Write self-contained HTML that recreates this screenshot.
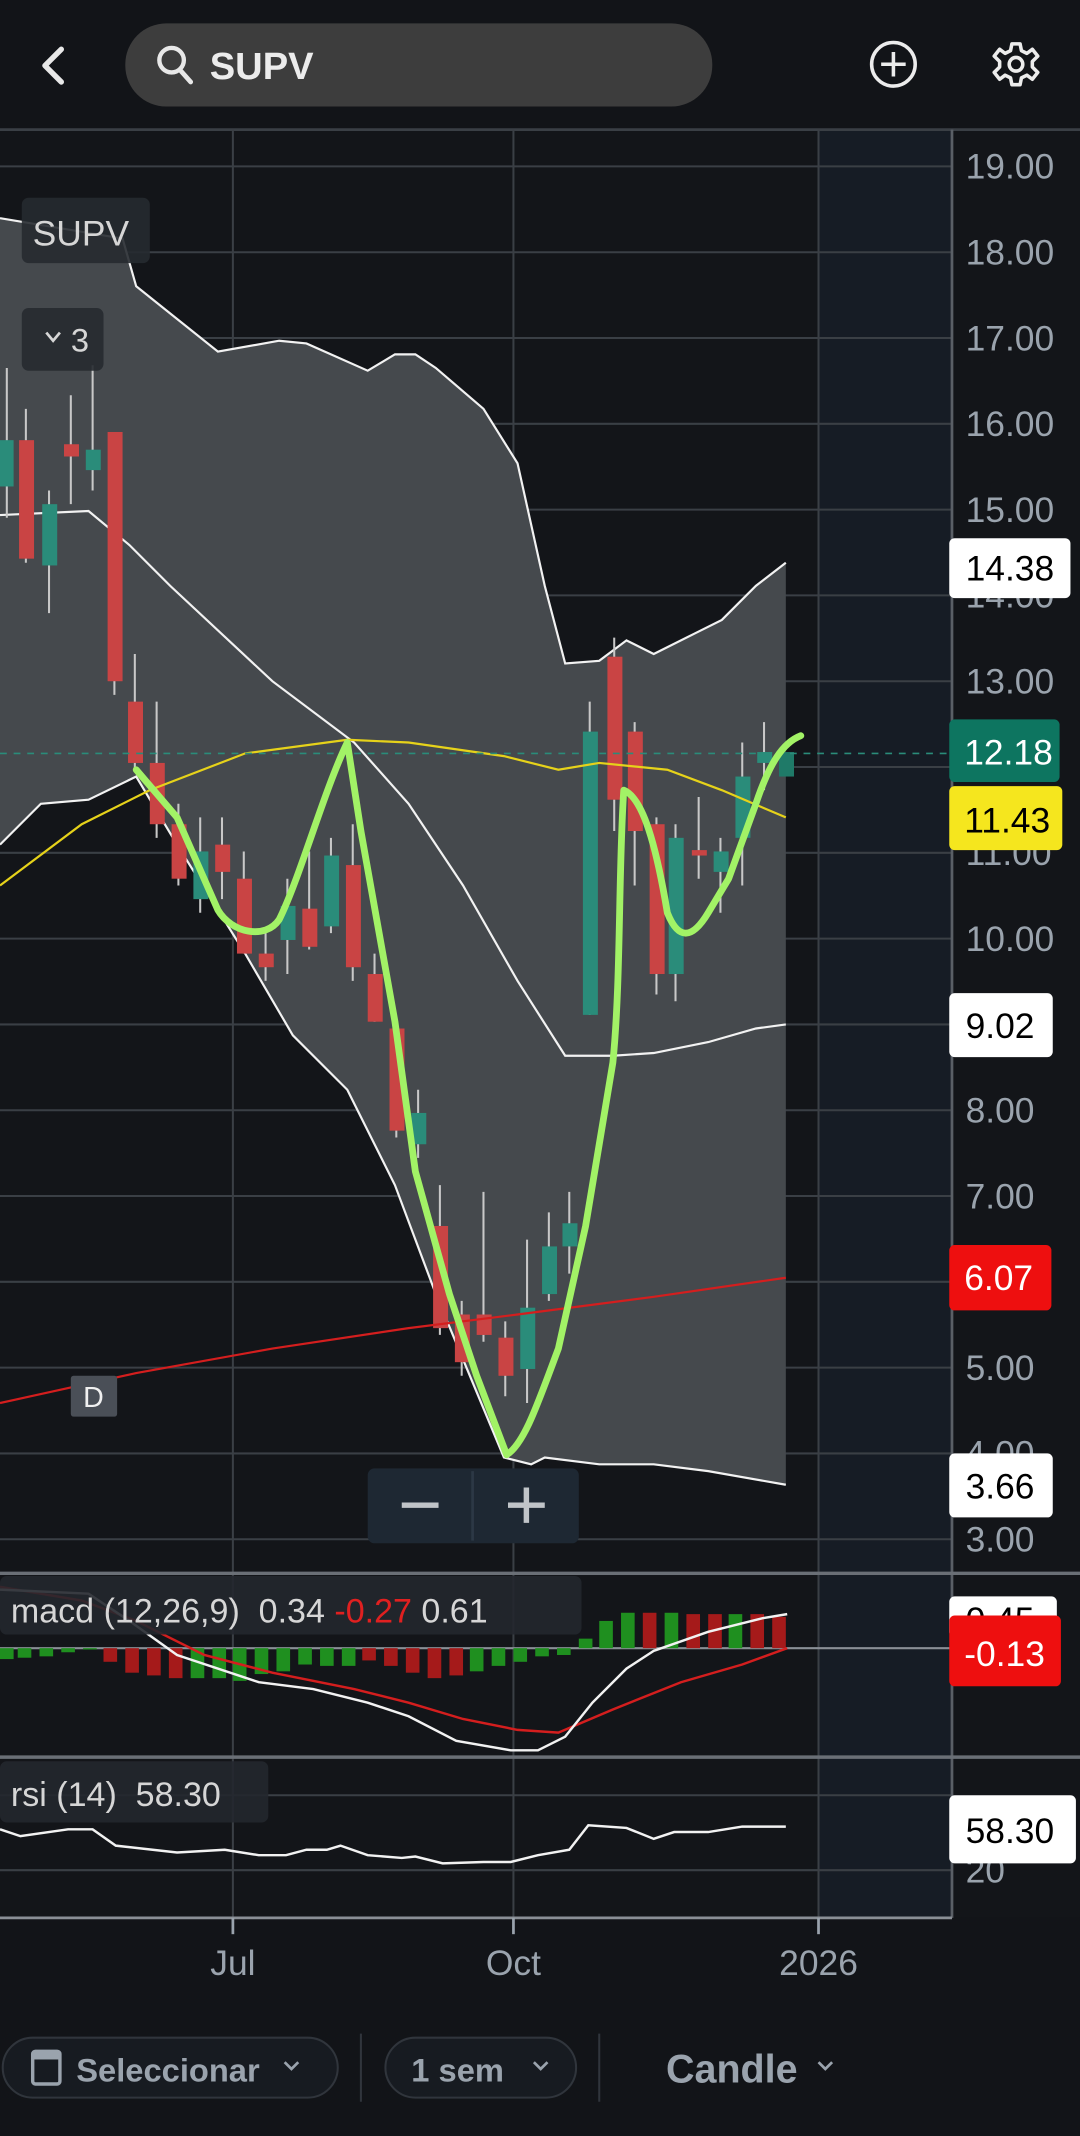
<!DOCTYPE html>
<html><head><meta charset="utf-8"><style>
html,body{margin:0;padding:0;background:#121418;}
svg{display:block}
text{font-family:"Liberation Sans",sans-serif;white-space:pre}
</style></head><body>
<svg width="1080" height="2136" viewBox="0 0 793 1568" xmlns="http://www.w3.org/2000/svg">
<rect width="793" height="1568" fill="#121418"/>
<!-- header -->
<path d="M45 36 L33 48 L45 60" fill="none" stroke="#e8e8e8" stroke-width="4" stroke-linecap="round" stroke-linejoin="round"/>
<rect x="92" y="17" width="431" height="61" rx="30" fill="#3d3d3d"/>
<circle cx="126" cy="44" r="9" fill="none" stroke="#e8e8e8" stroke-width="3.2"/>
<line x1="132" y1="51" x2="140" y2="60" stroke="#e8e8e8" stroke-width="3.5" stroke-linecap="round"/>
<text x="154" y="58" font-size="28" font-weight="bold" fill="#ececec">SUPV</text>
<circle cx="656" cy="47" r="16" fill="none" stroke="#ececec" stroke-width="2.6"/>
<path d="M656 38 V56 M647 47 H665" stroke="#ececec" stroke-width="2.6"/>
<g transform="translate(746,47)" fill="none" stroke="#ececec" stroke-width="2.6">
<path d="M-3 -15 H3 L4 -10 L8 -8 L12 -11 L16 -6 L12 -2 L12 2 L16 6 L12 11 L8 8 L4 10 L3 15 H-3 L-4 10 L-8 8 L-12 11 L-16 6 L-12 2 L-12 -2 L-16 -6 L-12 -11 L-8 -8 L-4 -10 Z" stroke-linejoin="round"/>
<circle r="5"/>
</g>
<!-- chart bg -->
<rect x="0" y="95" width="793" height="1313" fill="#131519"/>
<rect x="601" y="95" width="98" height="1313" fill="#161c25"/>
<line x1="0" y1="95" x2="793" y2="95" stroke="#3a3f45" stroke-width="2"/>
<g stroke="#3a3f45" stroke-width="1.5">
<line x1="0" y1="122" x2="699" y2="122"/><line x1="0" y1="185" x2="699" y2="185"/><line x1="0" y1="248" x2="699" y2="248"/><line x1="0" y1="311" x2="699" y2="311"/><line x1="0" y1="374" x2="699" y2="374"/><line x1="0" y1="437" x2="699" y2="437"/><line x1="0" y1="500" x2="699" y2="500"/><line x1="0" y1="563" x2="699" y2="563"/><line x1="0" y1="626" x2="699" y2="626"/><line x1="0" y1="689" x2="699" y2="689"/><line x1="0" y1="752" x2="699" y2="752"/><line x1="0" y1="815" x2="699" y2="815"/><line x1="0" y1="878" x2="699" y2="878"/><line x1="0" y1="941" x2="699" y2="941"/><line x1="0" y1="1004" x2="699" y2="1004"/><line x1="0" y1="1067" x2="699" y2="1067"/><line x1="0" y1="1130" x2="699" y2="1130"/>
<line x1="0" y1="1318" x2="699" y2="1318"/><line x1="0" y1="1373" x2="699" y2="1373"/>
<line x1="171" y1="95" x2="171" y2="1408"/><line x1="377" y1="95" x2="377" y2="1408"/><line x1="601" y1="95" x2="601" y2="1408"/>
</g>
<path d="M0 160 L90 175 L100 210 L125 230 L160 258 L205 250 L225 252 L270 272 L290 260 L305 260 L320 270 L355 300 L380 340 L400 430 L415 487 L440 485 L460 470 L480 480 L510 465 L530 455 L555 430 L577 413 L577 1090 L520 1080 L480 1075 L440 1075 L400 1070 L390 1075 L370 1070 L345 1010 L320 950 L290 870 L255 800 L215 760 L180 700 L130 620 L100 570 L65 587 L30 590 L0 620 Z" fill="#45494d"/>
<g fill="none" stroke="#f2f2f2" stroke-width="1.6">
<path d="M0 160 L90 175 L100 210 L125 230 L160 258 L205 250 L225 252 L270 272 L290 260 L305 260 L320 270 L355 300 L380 340 L400 430 L415 487 L440 485 L460 470 L480 480 L510 465 L530 455 L555 430 L577 413"/>
<path d="M577 1090 L520 1080 L480 1075 L440 1075 L400 1070 L390 1075 L370 1070 L345 1010 L320 950 L290 870 L255 800 L215 760 L180 700 L130 620 L100 570 L65 587 L30 590 L0 620"/>
<path d="M0 378 L65 375 L95 400 L125 430 L200 500 L260 545 L300 590 L340 650 L380 720 L415 775 L450 775 L480 773 L520 765 L555 755 L577 752"/>
</g>
<g stroke="#c8c8c8" stroke-width="1.5">
<line x1="5" y1="270" x2="5" y2="380"/><line x1="19" y1="300" x2="19" y2="413"/><line x1="36" y1="360" x2="36" y2="450"/><line x1="52" y1="290" x2="52" y2="370"/><line x1="68" y1="268" x2="68" y2="360"/><line x1="84" y1="317" x2="84" y2="510"/><line x1="99" y1="480" x2="99" y2="565"/><line x1="115" y1="515" x2="115" y2="615"/><line x1="131" y1="590" x2="131" y2="650"/><line x1="147" y1="600" x2="147" y2="670"/><line x1="163" y1="600" x2="163" y2="660"/><line x1="179" y1="625" x2="179" y2="700"/><line x1="195" y1="685" x2="195" y2="720"/><line x1="211" y1="645" x2="211" y2="715"/><line x1="227" y1="625" x2="227" y2="697"/><line x1="243" y1="615" x2="243" y2="685"/><line x1="259" y1="605" x2="259" y2="720"/><line x1="275" y1="700" x2="275" y2="750"/><line x1="291" y1="755" x2="291" y2="835"/><line x1="307" y1="800" x2="307" y2="850"/><line x1="323" y1="870" x2="323" y2="980"/><line x1="339" y1="955" x2="339" y2="1010"/><line x1="355" y1="875" x2="355" y2="985"/><line x1="371" y1="970" x2="371" y2="1025"/><line x1="387" y1="910" x2="387" y2="1030"/><line x1="403" y1="890" x2="403" y2="955"/><line x1="418" y1="875" x2="418" y2="935"/><line x1="433" y1="515" x2="433" y2="745"/><line x1="451" y1="468" x2="451" y2="610"/><line x1="466" y1="530" x2="466" y2="650"/><line x1="482" y1="600" x2="482" y2="730"/><line x1="496" y1="605" x2="496" y2="735"/><line x1="513" y1="585" x2="513" y2="645"/><line x1="529" y1="615" x2="529" y2="670"/><line x1="545" y1="545" x2="545" y2="650"/><line x1="561" y1="530" x2="561" y2="580"/>
</g>
<g fill="#c94444">
<rect x="14" y="323" width="11" height="87"/><rect x="47" y="326" width="11" height="9"/><rect x="79" y="317" width="11" height="183"/><rect x="94" y="515" width="11" height="45"/><rect x="110" y="560" width="11" height="45"/><rect x="126" y="605" width="11" height="40"/><rect x="158" y="620" width="11" height="20"/><rect x="174" y="645" width="11" height="55"/><rect x="190" y="700" width="11" height="10"/><rect x="222" y="667" width="11" height="28"/><rect x="254" y="635" width="11" height="75"/><rect x="270" y="715" width="11" height="35"/><rect x="286" y="755" width="11" height="75"/><rect x="318" y="900" width="11" height="75"/><rect x="334" y="965" width="11" height="35"/><rect x="350" y="965" width="11" height="15"/><rect x="366" y="982" width="11" height="28"/><rect x="446" y="482" width="11" height="105"/><rect x="461" y="537" width="11" height="73"/><rect x="477" y="605" width="11" height="110"/><rect x="508" y="624" width="11" height="4"/>
</g>
<g fill="#2a8c7a">
<rect x="0" y="323" width="10" height="34"/><rect x="31" y="370" width="11" height="45"/><rect x="63" y="330" width="11" height="15"/><rect x="142" y="625" width="11" height="35"/><rect x="206" y="665" width="11" height="25"/><rect x="238" y="628" width="11" height="52"/><rect x="302" y="817" width="11" height="23"/><rect x="382" y="960" width="11" height="45"/><rect x="398" y="915" width="11" height="35"/><rect x="413" y="898" width="11" height="17"/><rect x="428" y="537" width="11" height="208"/><rect x="491" y="615" width="11" height="100"/><rect x="524" y="625" width="11" height="15"/><rect x="540" y="570" width="11" height="45"/><rect x="556" y="552" width="11" height="8"/><rect x="572" y="552" width="11" height="18" fill="#1f7a68"/>
</g>
<path d="M0 650 L60 605 L110 580 L180 553 L255 543 L300 545 L370 555 L410 565 L440 560 L490 565 L530 580 L577 600" fill="none" stroke="#e6d21a" stroke-width="1.6"/>
<path d="M0 1030 L100 1008 L200 990 L300 975 L380 965 L480 952 L577 938" fill="none" stroke="#d41e1e" stroke-width="1.6"/>
<line x1="0" y1="553" x2="699" y2="553" stroke="#2a8c7a" stroke-width="1.2" stroke-dasharray="5,5"/>
<path d="M100 565 L130 600 L160 668 C170 685 195 690 205 675 C220 645 238 580 255 545 L265 610 L290 750 L305 860 L330 950 L350 1010 L372 1068 C385 1060 395 1030 410 990 L430 900 L450 780 C456 720 454 640 458 580 C470 585 480 610 490 670 C498 690 508 690 520 670 L535 645 L555 590 C565 560 575 545 588 540" fill="none" stroke="#a2f266" stroke-width="5" stroke-linecap="round" stroke-linejoin="round"/>
<rect x="16" y="145" width="94" height="48" rx="5" fill="#262a30" opacity="0.9"/>
<text x="24" y="180" font-size="26" fill="#d6d6d6">SUPV</text>
<rect x="16" y="226" width="60" height="46" rx="5" fill="#262a30" opacity="0.9"/>
<path d="M34 244 L39 250 L44 244" fill="none" stroke="#d6d6d6" stroke-width="2"/>
<text x="52" y="258" font-size="24" fill="#d6d6d6">3</text>
<rect x="52" y="1010" width="34" height="30" rx="2" fill="#4a4f57"/>
<text x="61" y="1033" font-size="21" fill="#f0f0f0">D</text>
<rect x="270" y="1078" width="155" height="55" rx="5" fill="#1e2833"/>
<line x1="347" y1="1080" x2="347" y2="1131" stroke="#2c3845" stroke-width="2"/>
<path d="M295 1105 H322 M373 1105 H400 M386.5 1092 V1118" stroke="#c0c4c8" stroke-width="4"/>
<line x1="699" y1="95" x2="699" y2="1408" stroke="#5a5f66" stroke-width="2"/>
<g font-size="26" fill="#9aa3ad">
<text x="709" y="131">19.00</text><text x="709" y="194">18.00</text><text x="709" y="257">17.00</text><text x="709" y="320">16.00</text><text x="709" y="383">15.00</text><text x="709" y="446">14.00</text><text x="709" y="509">13.00</text><text x="709" y="635">11.00</text><text x="709" y="698">10.00</text><text x="709" y="824">8.00</text><text x="709" y="887">7.00</text><text x="709" y="1013">5.00</text><text x="709" y="1076">4.00</text><text x="709" y="1139">3.00</text>
<text x="709" y="1382">20</text>
</g>
<rect x="697" y="395" width="89" height="44" rx="4" fill="#fff"/><text x="709" y="426" font-size="26" fill="#000">14.38</text>
<rect x="697" y="528" width="81" height="46" rx="4" fill="#0d7560"/><text x="708" y="561" font-size="26" fill="#fff">12.18</text>
<rect x="697" y="577" width="83" height="47" rx="4" fill="#f5e61e"/><text x="708" y="611" font-size="26" fill="#000">11.43</text>
<rect x="697" y="729" width="76" height="47" rx="4" fill="#fff"/><text x="709" y="762" font-size="26" fill="#000">9.02</text>
<rect x="697" y="914" width="75" height="48" rx="4" fill="#ee0f0f"/><text x="708" y="947" font-size="26" fill="#fff">6.07</text>
<rect x="697" y="1067" width="76" height="47" rx="4" fill="#fff"/><text x="709" y="1100" font-size="26" fill="#000">3.66</text>
<line x1="0" y1="1155" x2="793" y2="1155" stroke="#6a6f76" stroke-width="2.5"/>
<line x1="0" y1="1290" x2="793" y2="1290" stroke="#6a6f76" stroke-width="2.5"/>
<line x1="0" y1="1408" x2="699" y2="1408" stroke="#8a8f96" stroke-width="2"/>
<line x1="0" y1="1210" x2="699" y2="1210" stroke="#8a8f96" stroke-width="1.5"/>
<g>
<rect x="0" y="1210" width="10" height="8" fill="#1f8f1f"/><rect x="13" y="1210" width="10" height="7" fill="#1f8f1f"/><rect x="29" y="1210" width="10" height="6" fill="#1f8f1f"/><rect x="45" y="1210" width="10" height="3" fill="#1f8f1f"/><rect x="61" y="1210" width="10" height="1" fill="#1f8f1f"/>
<rect x="76" y="1210" width="10" height="10" fill="#a51a1a"/><rect x="92" y="1210" width="10" height="18" fill="#a51a1a"/><rect x="108" y="1210" width="10" height="20" fill="#a51a1a"/><rect x="124" y="1210" width="10" height="22" fill="#a51a1a"/><rect x="140" y="1210" width="10" height="22" fill="#1f8f1f"/><rect x="156" y="1210" width="10" height="22" fill="#1f8f1f"/><rect x="171" y="1210" width="10" height="24" fill="#1f8f1f"/><rect x="187" y="1210" width="10" height="19" fill="#1f8f1f"/><rect x="203" y="1210" width="10" height="17" fill="#1f8f1f"/><rect x="219" y="1210" width="10" height="12" fill="#1f8f1f"/>
<rect x="235" y="1210" width="10" height="13" fill="#1f8f1f"/><rect x="251" y="1210" width="10" height="13" fill="#1f8f1f"/><rect x="266" y="1210" width="10" height="9" fill="#a51a1a"/><rect x="282" y="1210" width="10" height="13" fill="#a51a1a"/><rect x="298" y="1210" width="10" height="18" fill="#a51a1a"/><rect x="314" y="1210" width="10" height="22" fill="#a51a1a"/><rect x="330" y="1210" width="10" height="20" fill="#a51a1a"/><rect x="345" y="1210" width="10" height="17" fill="#1f8f1f"/><rect x="361" y="1210" width="10" height="13" fill="#1f8f1f"/><rect x="377" y="1210" width="10" height="10" fill="#1f8f1f"/><rect x="393" y="1210" width="10" height="6" fill="#1f8f1f"/><rect x="409" y="1210" width="10" height="5" fill="#1f8f1f"/>
<rect x="425" y="1203" width="10" height="7" fill="#1f8f1f"/><rect x="440" y="1190" width="10" height="20" fill="#1f8f1f"/><rect x="456" y="1184" width="10" height="26" fill="#1f8f1f"/><rect x="472" y="1184" width="10" height="26" fill="#a51a1a"/><rect x="488" y="1184" width="10" height="26" fill="#1f8f1f"/><rect x="504" y="1185" width="10" height="25" fill="#a51a1a"/><rect x="520" y="1185" width="10" height="25" fill="#a51a1a"/><rect x="535" y="1185" width="10" height="25" fill="#1f8f1f"/><rect x="551" y="1185" width="10" height="25" fill="#a51a1a"/><rect x="567" y="1187" width="10" height="23" fill="#a51a1a"/>
</g>
<path d="M0 1165 L60 1175 L100 1190 L150 1215 L200 1228 L260 1240 L300 1250 L340 1262 L380 1270 L410 1272 L450 1255 L500 1235 L545 1222 L578 1210" fill="none" stroke="#d41e1e" stroke-width="1.8"/>
<path d="M0 1167 L65 1170 L95 1190 L130 1215 L190 1235 L230 1240 L270 1250 L300 1260 L335 1278 L375 1285 L395 1285 L415 1275 L435 1250 L460 1225 L480 1212 L520 1198 L560 1188 L578 1185" fill="none" stroke="#f2f2f2" stroke-width="1.8"/>
<rect x="0" y="1157" width="427" height="43" rx="5" fill="#23272d" opacity="0.9"/>
<text x="8" y="1191" font-size="25" fill="#d6d6d6">macd (12,26,9)  0.34 <tspan fill="#e02020">-0.27</tspan> 0.61</text>
<rect x="697" y="1172" width="79" height="30" rx="4" fill="#fff"/><text x="709" y="1198" font-size="26" fill="#000">0.45</text>
<rect x="697" y="1186" width="82" height="52" rx="4" fill="#ee0f0f"/><text x="708" y="1223" font-size="26" fill="#fff">-0.13</text>
<path d="M0 1343 L15 1348 L50 1343 L68 1343 L85 1355 L130 1360 L165 1358 L190 1362 L210 1362 L225 1358 L240 1358 L250 1355 L270 1362 L295 1364 L305 1363 L325 1368 L355 1367 L375 1367 L395 1362 L418 1358 L432 1340 L460 1342 L480 1350 L495 1345 L520 1345 L545 1341 L577 1341" fill="none" stroke="#f2f2f2" stroke-width="1.8"/>
<rect x="0" y="1293" width="197" height="45" rx="5" fill="#23272d" opacity="0.9"/>
<text x="8" y="1326" font-size="25" fill="#d6d6d6">rsi (14)  58.30</text>
<rect x="697" y="1318" width="93" height="50" rx="4" fill="#fff"/><text x="709" y="1353" font-size="26" fill="#000">58.30</text>
<g stroke="#9aa3ad" stroke-width="2"><line x1="171" y1="1408" x2="171" y2="1420"/><line x1="377" y1="1408" x2="377" y2="1420"/><line x1="601" y1="1408" x2="601" y2="1420"/></g>
<g font-size="26" fill="#9aa3ad" text-anchor="middle"><text x="171" y="1450">Jul</text><text x="377" y="1450">Oct</text><text x="601" y="1450">2026</text></g>
<rect x="2" y="1496" width="246" height="44" rx="22" fill="#171b21" stroke="#30353c" stroke-width="1.5"/>
<rect x="24" y="1506" width="20" height="24" rx="2" fill="none" stroke="#9aa3ad" stroke-width="2.5"/>
<rect x="24" y="1506" width="20" height="6" fill="#9aa3ad"/>
<text x="56" y="1528" font-size="24" font-weight="bold" fill="#9aa3ad">Seleccionar</text>
<path d="M209 1514 L214 1519 L219 1514" fill="none" stroke="#9aa3ad" stroke-width="2"/>
<line x1="265" y1="1493" x2="265" y2="1543" stroke="#30353c" stroke-width="1.5"/>
<rect x="283" y="1496" width="140" height="44" rx="22" fill="#171b21" stroke="#30353c" stroke-width="1.5"/>
<text x="302" y="1528" font-size="24" font-weight="bold" fill="#9aa3ad">1 sem</text>
<path d="M392 1514 L397 1519 L402 1514" fill="none" stroke="#9aa3ad" stroke-width="2"/>
<line x1="440" y1="1493" x2="440" y2="1543" stroke="#30353c" stroke-width="1.5"/>
<text x="489" y="1529" font-size="29" font-weight="bold" fill="#9aa3ad">Candle</text>
<path d="M601 1514 L606 1519 L611 1514" fill="none" stroke="#9aa3ad" stroke-width="2"/>
</svg>
</body></html>
